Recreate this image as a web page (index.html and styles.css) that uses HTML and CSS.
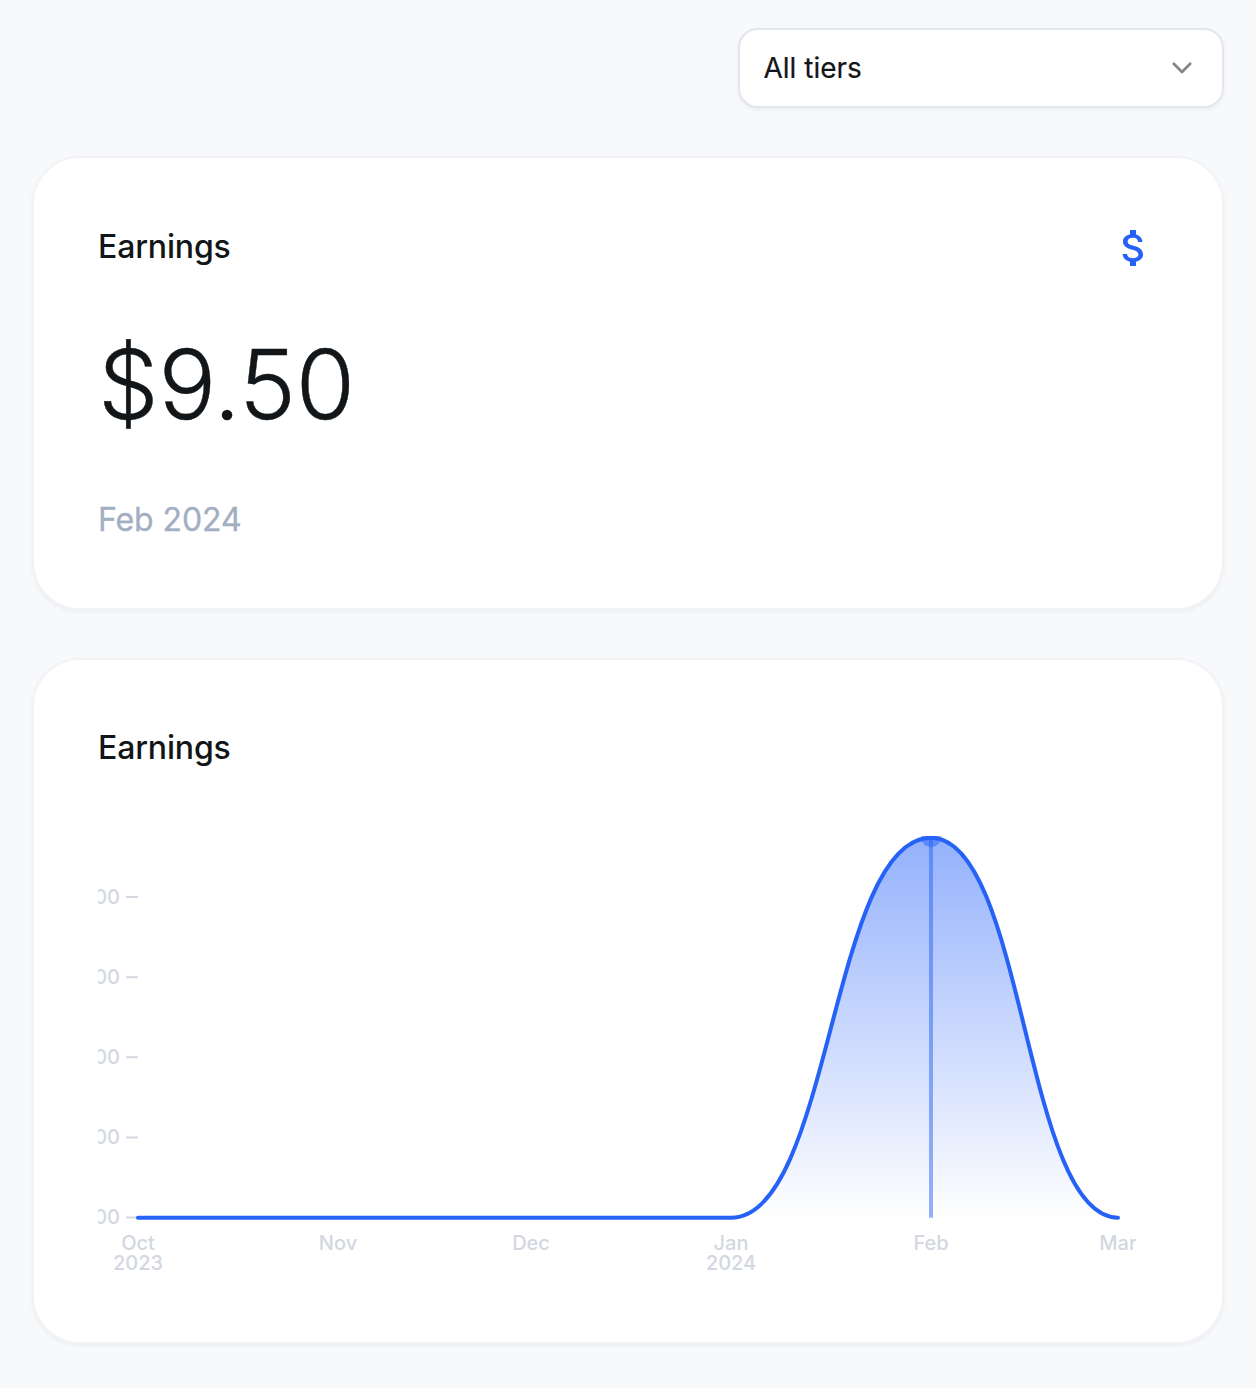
FILE: index.html
```html
<!DOCTYPE html>
<html lang="en">
<head>
<meta charset="utf-8">
<title>Earnings</title>
<link rel="stylesheet" href="styles.css">
</head>
<body>
<main class="page">
  <button class="select" type="button">
    <span>All tiers</span>
    <svg class="chevron" viewBox="0 0 24 16" fill="none"><path d="M3.8 3.8l8.2 8.2 8.2-8.2"/></svg>
  </button>

  <section class="card summary">
    <header class="card-header">
      <h2 class="title">Earnings</h2>
      <svg class="dollar" viewBox="0 0 24 24"><path d="M11.8 10.9c-2.27-.59-3-1.2-3-2.15 0-1.09 1.01-1.85 2.7-1.85 1.78 0 2.44.85 2.5 2.1h2.21c-.07-1.72-1.12-3.3-3.21-3.81V3h-3v2.16c-1.94.42-3.5 1.68-3.5 3.61 0 2.31 1.91 3.46 4.7 4.13 2.5.6 3 1.48 3 2.41 0 .69-.49 1.79-2.7 1.79-2.06 0-2.87-.92-2.98-2.1h-2.2c.12 2.19 1.76 3.42 3.68 3.83V21h3v-2.15c1.95-.37 3.5-1.5 3.5-3.55 0-2.84-2.43-3.81-4.7-4.4z"/></svg>
    </header>
    <p class="amount">$9.50</p>
    <p class="period">Feb 2024</p>
  </section>

  <section class="card history">
    <h2 class="title">Earnings</h2>
    <svg class="chart" viewBox="0 0 1060 442">
      <defs>
        <linearGradient id="area" x1="0" y1="0" x2="0" y2="1">
          <stop offset="0" stop-color="#2762f7" stop-opacity=".5"/>
          <stop offset="1" stop-color="#2762f7" stop-opacity="0"/>
        </linearGradient>
      </defs>
      <g class="ticks">
        <path d="M28 61h12M28 141.2h12M28 221.2h12M28 301.4h12M28 381.5h12"/>
      </g>
      <g class="labels y-labels">
        <text x="22" y="68">$8.00</text>
        <text x="22" y="148">$6.00</text>
        <text x="22" y="228">$4.00</text>
        <text x="22" y="308">$2.00</text>
        <text x="22" y="388">$0.00</text>
      </g>
      <g class="labels x-labels">
        <text x="40" y="414">Oct</text>
        <text x="40" y="434">2023</text>
        <text x="240" y="414">Nov</text>
        <text x="433" y="414">Dec</text>
        <text x="633" y="414">Jan</text>
        <text x="633" y="434">2024</text>
        <text x="833" y="414">Feb</text>
        <text x="1020" y="414">Mar</text>
      </g>
      <path fill="url(#area)" d="M633 381.7C733 381.7 733 1.7 833 1.7C926.5 1.7 926.5 381.7 1020 381.7Z"/>
      <path class="line" d="M40 381.7H633C733 381.7 733 1.7 833 1.7C926.5 1.7 926.5 381.7 1020 381.7"/>
      <path class="cursor" d="M833 1.7V381.7"/>
      <circle class="dot" cx="833" cy="1.2" r="10"/>
    </svg>
  </section>
</main>
</body>
</html>
```

FILE: styles.css
```css
* {
  box-sizing: border-box;
}

body {
  margin: 0;
  background: #f8f9fb;
  color: #121619;
  font-family: Inter, "Liberation Sans", sans-serif;
}

.page {
  display: flex;
  flex-direction: column;
  gap: 48px;
  min-height: 1388px;
  padding: 28px 32px 44px;
}

.select {
  display: flex;
  align-items: center;
  justify-content: space-between;
  align-self: flex-end;
  width: 486px;
  height: 80px;
  padding: 0 28px 0 23.5px;
  border: 2px solid #e4e6ef;
  border-radius: 20px;
  background: #fff;
  box-shadow: 0 2px 4px rgba(18, 22, 25, 0.05);
  color: inherit;
  font: 400 28px/40px Inter, "Liberation Sans", sans-serif;
  -webkit-text-stroke: 0.2px currentColor;
}

.chevron {
  width: 24px;
  height: 16px;
  stroke: #838589;
  stroke-linecap: round;
  stroke-linejoin: round;
  stroke-width: 2.7;
}

.card {
  border: 2px solid #f2f3f6;
  border-radius: 48px;
  background: #fff;
  box-shadow: 0 2px 4px rgba(18, 22, 25, 0.05);
}

.summary {
  height: 454px;
  padding: 64px 64px 0;
}

.history {
  height: 686px;
  padding: 64px 64px 0;
}

.card-header {
  display: flex;
  align-items: flex-start;
  justify-content: space-between;
}

.title {
  margin: 0;
  font-size: 32px;
  font-weight: 500;
  line-height: 48px;
  letter-spacing: -0.15px;
}

.summary .title {
  padding-top: 1px;
}

.dollar {
  width: 48px;
  height: 48px;
  margin-top: 2px;
  fill: #2762f7;
}

.amount {
  margin: 64px 0 0;
  font-size: 96px;
  font-weight: 300;
  line-height: 96px;
  letter-spacing: -0.25px;
  -webkit-text-stroke: 0.4px currentColor;
}

.period {
  margin: 64px 0 0;
  color: #a2aec2;
  font-size: 32px;
  line-height: 48px;
  letter-spacing: -0.1px;
  -webkit-text-stroke: 0.3px currentColor;
}

.chart {
  display: block;
  width: 1060px;
  height: 442px;
  margin-top: 64px;
  overflow: hidden;
}

.ticks {
  stroke: #d2d7e0;
  stroke-width: 2;
}

.labels {
  fill: #d2d7e0;
  font-size: 20px;
  font-weight: 450;
}

.y-labels {
  text-anchor: end;
}

.x-labels {
  text-anchor: middle;
}

.line {
  fill: none;
  stroke: #2762f7;
  stroke-width: 4;
  stroke-linecap: round;
}

.cursor {
  stroke: #2762f7;
  stroke-opacity: 0.5;
  stroke-width: 4;
}

.dot {
  fill: #2762f7;
  fill-opacity: 0.5;
}
```
